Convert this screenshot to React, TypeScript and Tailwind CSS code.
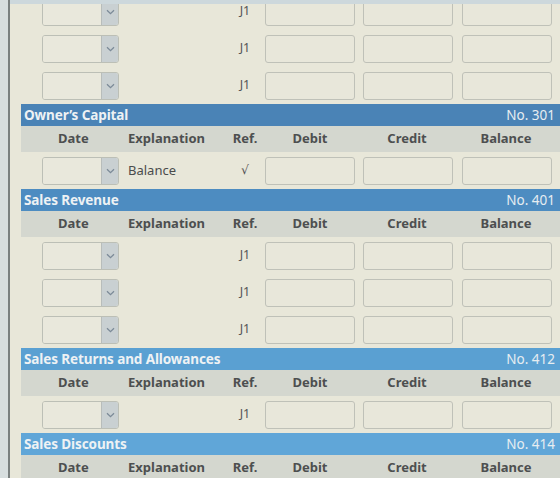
import React from "react";

type Row = { exp?: string; ref: string };
type Account = { name: string; no: string; rows: Row[]; bar: string };

const accounts: Account[] = [
  { name: "Owner\u2019s Capital", no: "No. 301", bar: "bg-[#4a83b6]", rows: [{ exp: "Balance", ref: "\u221A" }] },
  { name: "Sales Revenue", no: "No. 401", bar: "bg-[#4d8cc1]", rows: [{ ref: "J1" }, { ref: "J1" }, { ref: "J1" }] },
  { name: "Sales Returns and Allowances", no: "No. 412", bar: "bg-[#5aa0d2]", rows: [{ ref: "J1" }] },
  { name: "Sales Discounts", no: "No. 414", bar: "bg-[#60a6d8]", rows: [] },
];

const cols = "grid grid-cols-[100px_104px_40px_98px_98px_97px]";

function DateSelect() {
  return (
    <div className="ml-[21px] flex h-[28px] w-[77px] rounded-[3px] border border-[#bcbfb6] overflow-hidden">
      <div className="flex-1 bg-[#e9e8dc]" />
      <div className="flex w-[17px] items-center justify-center border-l border-[#b8bdbb] bg-[#c9d0d2]">
        <svg width="9" height="6" viewBox="0 0 9 6" fill="none">
          <path d="M1 1.2 4.5 4.6 8 1.2" stroke="#7c8a98" strokeWidth="1.3" />
        </svg>
      </div>
    </div>
  );
}

function Box({ ml }: { ml: string }) {
  return <div className={`${ml} h-[28px] w-[90px] rounded-[3px] border border-[#bfc1b8] bg-[#e8e7da]`} />;
}

function EntryRow({ row }: { row: Row }) {
  return (
    <div className={`${cols} h-[37px] items-center`}>
      <DateSelect />
      <div className="pl-[7px] text-[13px] text-[#4a4c4c]">{row.exp ?? ""}</div>
      <div className="text-center text-[12.5px] text-[#555]">{row.ref}</div>
      <Box ml="ml-0" />
      <Box ml="ml-0" />
      <Box ml="ml-[1px]" />
    </div>
  );
}

function AccountBlock({ acc }: { acc: Account }) {
  return (
    <div>
      <div className={`flex h-[22px] items-center justify-between px-[3px] ${acc.bar}`}>
        <span className="text-[13.5px] font-bold tracking-[-0.1px] text-[#eef2f4]">{acc.name}</span>
        <span className="pr-[2px] text-[13.5px] text-[#e6edf1]">{acc.no}</span>
      </div>
      <div className={`${cols} h-[26px] items-center bg-[#d4d7cf] text-[13px] font-bold text-[#4d4f50]`}>
        <div className="pl-[37px]">Date</div>
        <div className="pl-[7px]">Explanation</div>
        <div className="text-center">Ref.</div>
        <div className="pr-[8px] text-center">Debit</div>
        <div className="pr-[10px] text-center">Credit</div>
        <div className="pr-[7px] text-center">Balance</div>
      </div>
      {acc.rows.map((r, i) => (
        <EntryRow key={i} row={r} />
      ))}
    </div>
  );
}

export default function App() {
  return (
    <div
      className="flex h-[478px] w-[560px] overflow-hidden bg-[#e8e7d9]"
      style={{ fontFamily: '"Noto Sans", "DejaVu Sans", sans-serif' }}
    >
      <div className="w-[8px] shrink-0 bg-[#d7dedf]" />
      <div className="w-[2px] shrink-0 bg-[#7a8080]" />
      <div className="flex-1 overflow-hidden border-t-[4px] border-[#cdd8dc]">
        <div className="ml-[11px] -mt-[11px]">
          <EntryRow row={{ ref: "J1" }} />
          <EntryRow row={{ ref: "J1" }} />
          <EntryRow row={{ ref: "J1" }} />
          {accounts.map((a) => (
            <AccountBlock key={a.no} acc={a} />
          ))}
        </div>
      </div>
    </div>
  );
}
